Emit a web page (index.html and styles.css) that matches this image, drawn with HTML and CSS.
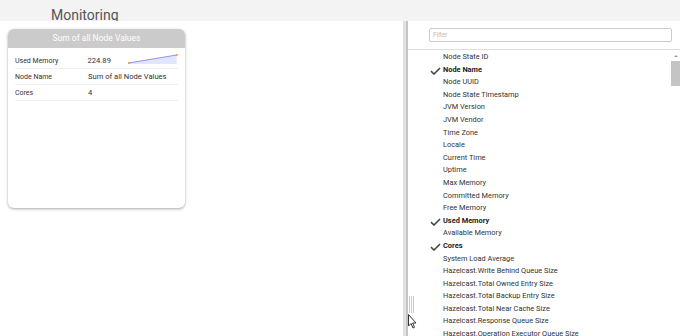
FILE: index.html
```html
<!DOCTYPE html>
<html>
<head>
<meta charset="utf-8">
<link rel="stylesheet" href="styles.css">
</head>
<body>
<div class="header"><span class="title">Monitoring</span></div>
<div class="main">
  <div class="left">
    <div class="card">
      <div class="card-head">Sum of all Node Values</div>
      <div class="card-body">
        <div class="row">
          <span class="label">Used Memory</span>
          <span class="value">224.89</span>
          <svg class="spark" width="50" height="10" viewBox="0 0 50 10">
            <polygon points="1,9 49,1 49,10 1,10" fill="#e3e6ff"/>
            <polyline points="1,9 49,1" fill="none" stroke="#8f8ff5" stroke-width="1"/>
            <circle cx="1" cy="9" r="1.2" fill="#f5a54a"/>
            <circle cx="49" cy="1" r="1.2" fill="#f5a54a"/>
          </svg>
        </div>
        <div class="row">
          <span class="label">Node Name</span>
          <span class="value">Sum of all Node Values</span>
        </div>
        <div class="row">
          <span class="label">Cores</span>
          <span class="value">4</span>
        </div>
      </div>
    </div>
  </div>
  <div class="splitter"><div class="split-light"></div><div class="split-dark"></div></div>
  <div class="panel">
    <div class="filter-bar"><div class="filter">Filter</div></div>
    <div class="list-wrap">
      <ul class="list">
        <li>Node State ID</li>
        <li class="on"><svg class="check" width="11" height="8" viewBox="0 0 11 8"><path d="M1 4.2 L4 7 L10 1" fill="none" stroke="#444" stroke-width="1.6"/></svg>Node Name</li>
        <li>Node UUID</li>
        <li>Node State Timestamp</li>
        <li>JVM Version</li>
        <li>JVM Vendor</li>
        <li>Time Zone</li>
        <li>Locale</li>
        <li>Current Time</li>
        <li>Uptime</li>
        <li>Max Memory</li>
        <li>Committed Memory</li>
        <li>Free Memory</li>
        <li class="on"><svg class="check" width="11" height="8" viewBox="0 0 11 8"><path d="M1 4.2 L4 7 L10 1" fill="none" stroke="#444" stroke-width="1.6"/></svg>Used Memory</li>
        <li>Available Memory</li>
        <li class="on"><svg class="check" width="11" height="8" viewBox="0 0 11 8"><path d="M1 4.2 L4 7 L10 1" fill="none" stroke="#444" stroke-width="1.6"/></svg>Cores</li>
        <li>System Load Average</li>
        <li>Hazelcast.Write Behind Queue Size</li>
        <li>Hazelcast.Total Owned Entry Size</li>
        <li>Hazelcast.Total Backup Entry Size</li>
        <li>Hazelcast.Total Near Cache Size</li>
        <li>Hazelcast.Response Queue Size</li>
        <li>Hazelcast.Operation Executor Queue Size</li>
      </ul>
      <div class="scrollbar">
        <div class="arrow"></div>
        <div class="thumb"></div>
      </div>
    </div>
  </div>
</div>
<div class="grip"></div>
<svg class="cursor" width="9" height="15" viewBox="0 0 9 15">
  <path d="M0.5 0.5 L0.5 12 L3 9.5 L5 14 L6.5 13.3 L4.6 9 L8 9 Z" fill="#fff" stroke="#333" stroke-width="1" stroke-linejoin="round"/>
</svg>
</body>
</html>
```
FILE: styles.css
```css
html, body {
  margin: 0;
  padding: 0;
}
body {
  width: 680px;
  height: 336px;
  overflow: hidden;
  background: #fff;
  font-family: Roboto, "Liberation Sans", sans-serif;
  color: #333;
  position: relative;
}
.header {
  height: 21px;
  background: #f3f3f3;
  box-sizing: border-box;
  padding-left: 51px;
  overflow: hidden;
}
.title {
  display: block;
  font-size: 14px;
  line-height: 14px;
  padding-top: 8px;
  color: #555;
}
.main {
  display: flex;
  height: 315px;
}
.left {
  width: 403px;
  padding: 8px 0 0 8px;
  box-sizing: border-box;
}
.card {
  width: 177px;
  height: 179px;
  border-radius: 6px;
  background: #fff;
  box-shadow: 0 1px 3px rgba(0,0,0,0.35);
  overflow: hidden;
}
.card-head {
  height: 19px;
  background: #cbcbcb;
  color: #fff;
  font-size: 8.5px;
  line-height: 19px;
  text-align: center;
}
.card-body {
  padding: 5px 7px 0 7px;
}
.row {
  display: flex;
  align-items: center;
  height: 16px;
  border-bottom: 1px solid #eee;
  box-sizing: border-box;
}
.label {
  width: 73px;
  font-size: 7px;
  color: #333;
}
.value {
  font-size: 7.6px;
  color: #333;
  width: 41px;
  white-space: nowrap;
}
.spark {
  margin-top: -3px;
}
.splitter {
  display: flex;
  width: 5px;
}
.split-light {
  width: 3px;
  background: #e2e2e2;
}
.split-dark {
  width: 2px;
  background: #c6c6c6;
}
.panel {
  flex: 1;
  display: flex;
  flex-direction: column;
  min-width: 0;
}
.filter-bar {
  height: 29px;
  border-bottom: 1px solid #dcdcdc;
  box-sizing: border-box;
  padding: 7px 8px 0 21px;
}
.filter {
  height: 14px;
  border: 1px solid #ccc;
  border-radius: 2px;
  box-sizing: border-box;
  font-size: 6.5px;
  line-height: 12px;
  padding-left: 3px;
  color: #bbb;
}
.list-wrap {
  flex: 1;
  display: flex;
  overflow: hidden;
}
.list {
  flex: 1;
  list-style: none;
  margin: 0;
  padding: 1px 0 0 35px;
}
.list li {
  height: 12.6px;
  line-height: 12.6px;
  font-size: 7.4px;
  color: #333;
  white-space: nowrap;
  position: relative;
}
.list li.on {
  font-weight: bold;
  color: #222;
}
.check {
  position: absolute;
  left: -13px;
  top: 3px;
}
.scrollbar {
  width: 9px;
  display: flex;
  flex-direction: column;
  align-items: center;
}
.arrow {
  margin-top: 5px;
  width: 0;
  height: 0;
  border-left: 2px solid transparent;
  border-right: 2px solid transparent;
  border-bottom: 2px solid #999;
}
.thumb {
  margin-top: 4px;
  width: 9px;
  height: 25px;
  background: #c4c4c4;
}
.grip {
  position: absolute;
  left: 409px;
  top: 296px;
  width: 5px;
  height: 17px;
  background: repeating-linear-gradient(90deg, #c8c8c8 0 1px, transparent 1px 2px);
}
.cursor {
  position: absolute;
  left: 408px;
  top: 314px;
}
```
